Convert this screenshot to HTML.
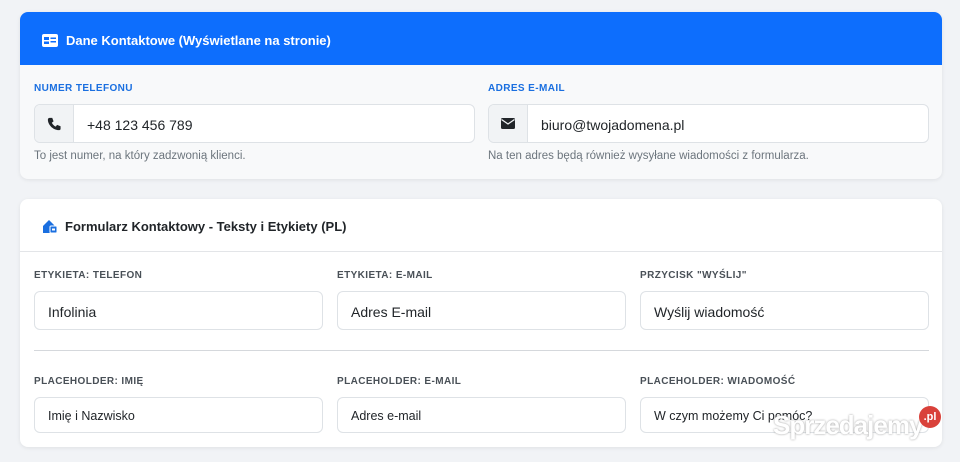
<!DOCTYPE html>
<html><head><meta charset="utf-8"><style>
*{box-sizing:border-box;margin:0;padding:0}
body{width:960px;height:462px;background:#f1f3f6;font-family:"Liberation Sans",sans-serif;position:relative;overflow:hidden;color:#212529}
.card{position:absolute;left:20px;width:922px;border-radius:8px;box-shadow:0 1px 4px rgba(0,0,0,.08);overflow:hidden}
.c1{top:12px;height:167px;background:#f8f9fa}
.h1{height:53px;background:#0d6efd;color:#fff;font-weight:bold;font-size:13px;display:flex;align-items:center;padding-left:22px;padding-top:3px}
.c2{top:199px;height:248px;background:#fff}
.h2{height:53px;border-bottom:1px solid #e3e5e8;font-weight:bold;font-size:13px;display:flex;align-items:center;padding-left:22px;padding-top:3px}
.a{position:absolute}
.lbl{font-size:10px;font-weight:bold;letter-spacing:.4px;color:#495057}
.blue{color:#1a6fe0}
.inp{position:absolute;height:39px;border:1px solid #dee2e6;border-radius:6px;background:#fff;font-size:14px;display:flex;align-items:center;padding-left:13px;padding-top:2px;color:#212529}
.grp{position:absolute;height:39px;border:1px solid #dee2e6;border-radius:6px;background:#fff;display:flex;overflow:hidden}
.grp .ic{width:39px;background:#f1f3f5;border-right:1px solid #dee2e6;display:flex;align-items:center;justify-content:center}
.grp .t{display:flex;align-items:center;padding-left:13px;padding-top:2px;font-size:14px}
.help{font-size:11.5px;color:#6c757d}
.sm{font-size:12.5px}
</style></head><body>
<div class="card c1">
<div class="h1"><svg width="16" height="13" viewBox="0 0 16 13" style="margin-right:8px"><rect x="0" y="0" width="16" height="13" rx="2" fill="#fff"/><rect x="2" y="3" width="5" height="3" fill="#0d6efd"/><rect x="2" y="7.5" width="5" height="2.5" fill="#0d6efd"/><rect x="8.5" y="3.5" width="5.5" height="1.5" fill="#0d6efd"/><rect x="8.5" y="7" width="5.5" height="1.5" fill="#0d6efd"/></svg>Dane Kontaktowe (Wyświetlane na stronie)</div>
</div>
<div class="a lbl blue" style="left:34px;top:83px">NUMER TELEFONU</div>
<div class="grp" style="left:34px;top:104px;width:441px"><div class="ic"><svg width="14" height="14" viewBox="0 0 16 16"><path d="M3 1l3 0 1.5 4-2 1.5c1 2 2.5 3.5 4.5 4.5l1.5-2 4 1.5v3c0 1-1 1.5-2 1.5C7 15 1 9 1 3c0-1 .8-2 2-2z" fill="#212529"/></svg></div><div class="t">+48 123 456 789</div></div>
<div class="a help" style="left:34px;top:150px">To jest numer, na który zadzwonią klienci.</div>
<div class="a lbl blue" style="left:488px;top:83px">ADRES E-MAIL</div>
<div class="grp" style="left:488px;top:104px;width:441px"><div class="ic"><svg width="14" height="11" viewBox="0 0 14 11"><rect width="14" height="11" rx="1.5" fill="#212529"/><path d="M0.5 1.5L7 6l6.5-4.5" stroke="#f1f3f5" stroke-width="1.3" fill="none"/></svg></div><div class="t">biuro@twojadomena.pl</div></div>
<div class="a help" style="left:488px;top:150px">Na ten adres będą również wysyłane wiadomości z formularza.</div>

<div class="card c2">
<div class="h2"><svg width="16" height="15" viewBox="0 0 16 15" style="margin-right:7px"><path d="M1 7L7 1l6 6v7H1z" fill="#1a6fe0"/><rect x="8" y="7" width="7" height="7" rx="1" fill="#1a6fe0" stroke="#fff" stroke-width="1"/><rect x="10" y="9.5" width="3" height="2" fill="#fff"/></svg>Formularz Kontaktowy - Teksty i Etykiety (PL)</div>
</div>
<div class="a lbl" style="left:34px;top:270px">ETYKIETA: TELEFON</div>
<div class="inp" style="left:34px;top:291px;width:289px">Infolinia</div>
<div class="a lbl" style="left:337px;top:270px">ETYKIETA: E-MAIL</div>
<div class="inp" style="left:337px;top:291px;width:289px">Adres E-mail</div>
<div class="a lbl" style="left:640px;top:270px">PRZYCISK "WYŚLIJ"</div>
<div class="inp" style="left:640px;top:291px;width:289px">Wyślij wiadomość</div>
<div class="a" style="left:34px;top:350px;width:895px;height:1px;background:#d5d8dc"></div>
<div class="a lbl" style="left:34px;top:376px">PLACEHOLDER: IMIĘ</div>
<div class="inp sm" style="left:34px;top:397px;width:289px;height:36px">Imię i Nazwisko</div>
<div class="a lbl" style="left:337px;top:376px">PLACEHOLDER: E-MAIL</div>
<div class="inp sm" style="left:337px;top:397px;width:289px;height:36px">Adres e-mail</div>
<div class="a lbl" style="left:640px;top:376px">PLACEHOLDER: WIADOMOŚĆ</div>
<div class="inp sm" style="left:640px;top:397px;width:289px;height:36px">W czym możemy Ci pomóc?</div>
<div class="a" style="left:773px;top:410px;font-size:26px;font-weight:bold;color:#fff;letter-spacing:-1px;text-shadow:0 0 2px #999">Sprzedajemy</div>
<div class="a" style="left:919px;top:406px;width:22px;height:22px;border-radius:50%;background:#d9413a;color:#fff;font-size:11px;font-weight:bold;display:flex;align-items:center;justify-content:center">.pl</div>
</body></html>
